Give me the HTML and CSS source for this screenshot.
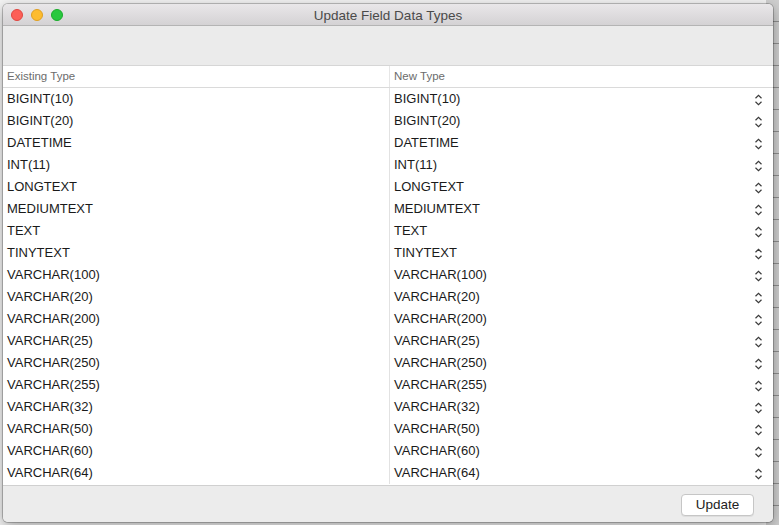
FILE: index.html
```html
<!DOCTYPE html>
<html>
<head>
<meta charset="utf-8">
<link rel="stylesheet" href="styles.css">
</head>
<body>
<div class="desk">
  <div class="bg-right"></div>
  <div class="window">
    <div class="titlebar">
      <div class="lights">
        <span class="light red"></span>
        <span class="light yellow"></span>
        <span class="light green"></span>
      </div>
      <div class="title">Update Field Data Types</div>
    </div>
    <div class="toolbar"></div>
    <div class="table">
      <div class="thead">
        <div class="th c1">Existing Type</div>
        <div class="th c2">New Type</div>
      </div>
      <div class="tbody" id="rows"></div>
    </div>
    <div class="footer">
      <button class="btn">Update</button>
    </div>
  </div>
</div>
<script src="app.js"></script>
</body>
</html>
```

FILE: app.js
```js
var types = ["BIGINT(10)","BIGINT(20)","DATETIME","INT(11)","LONGTEXT","MEDIUMTEXT","TEXT","TINYTEXT","VARCHAR(100)","VARCHAR(20)","VARCHAR(200)","VARCHAR(25)","VARCHAR(250)","VARCHAR(255)","VARCHAR(32)","VARCHAR(50)","VARCHAR(60)","VARCHAR(64)"];
var html = "";
var chev = '<svg class="step" width="9" height="12" viewBox="0 0 9 12"><path d="M1.5 4.2 L4.5 1.4 L7.5 4.2 M1.5 7.8 L4.5 10.6 L7.5 7.8" fill="none" stroke="#3a3a3a" stroke-width="1.2"/></svg>';
types.forEach(function (t) {
  html += '<div class="row"><div class="td c1">' + t + '</div><div class="td c2"><span>' + t + '</span>' + chev + '</div></div>';
});
document.getElementById("rows").innerHTML = html;
```

FILE: styles.css
```css
html, body {
  margin: 0;
  padding: 0;
}
body {
  width: 779px;
  height: 525px;
  overflow: hidden;
  background: #ececec;
  font-family: "Liberation Sans", Arial, sans-serif;
}
.desk {
  position: relative;
  width: 779px;
  height: 525px;
  background: #f3f3f3;
}
.bg-right {
  position: absolute;
  left: 766px;
  top: 0;
  width: 13px;
  height: 525px;
  background: repeating-linear-gradient(180deg, #cfcfcf 0, #cfcfcf 21px, #8f8f8f 21px, #8f8f8f 22px);
}
.window {
  position: absolute;
  left: 3px;
  top: 4px;
  width: 770px;
  height: 518px;
  display: flex;
  flex-direction: column;
  background: #ececec;
  border-radius: 5px;
  overflow: hidden;
  box-shadow: 0 0 0 1px rgba(0,0,0,0.22), 0 4px 14px rgba(0,0,0,0.35);
}
.titlebar {
  position: relative;
  height: 21px;
  flex: none;
  background: linear-gradient(180deg, #e9e7e9 0%, #d4d2d4 100%);
  border-bottom: 1px solid #b4b4b4;
  display: flex;
  align-items: center;
  justify-content: center;
}
.lights {
  position: absolute;
  left: 8px;
  top: 5px;
  display: flex;
  gap: 8px;
}
.light {
  width: 12px;
  height: 12px;
  border-radius: 50%;
  box-sizing: border-box;
}
.red { background: #fc5f57; border: 1px solid #de4640; }
.yellow { background: #fdbc2e; border: 1px solid #de9f22; }
.green { background: #29c83f; border: 1px solid #1aab2a; }
.title {
  font-size: 13.5px;
  color: #4a4a4a;
  margin-top: 1px;
}
.toolbar {
  height: 39px;
  flex: none;
  background: #ebebeb;
  border-bottom: 1px solid #d6d6d6;
}
.table {
  flex: none;
  height: 420px;
  background: #fff;
  border-bottom: 1px solid #d0d0d0;
  box-sizing: border-box;
}
.thead {
  display: flex;
  height: 22px;
  border-bottom: 1px solid #dadada;
  box-sizing: border-box;
}
.th {
  font-size: 11.5px;
  color: #6c6c6c;
  line-height: 21px;
}
.c1 {
  width: 387px;
  padding-left: 4px;
  box-sizing: border-box;
  border-right: 1px solid #e2e2e2;
}
.c2 {
  flex: 1;
  padding-left: 4px;
  box-sizing: border-box;
}
.thead .c1 { border-right-color: #e6e6e6; }
.tbody {
  display: flex;
  flex-direction: column;
}
.row {
  display: flex;
  height: 22px;
}
.td {
  font-size: 13px;
  color: #1a1a1a;
  line-height: 22px;
}
.td.c2 {
  display: flex;
  align-items: center;
  justify-content: space-between;
  padding-right: 10px;
}
.step {
  display: block;
  margin-top: 1px;
}
.footer {
  flex: 1;
  display: flex;
  align-items: center;
  justify-content: flex-end;
  padding-right: 19px;
  background: #ececec;
}
.btn {
  width: 73px;
  height: 22px;
  font-family: "Liberation Sans", Arial, sans-serif;
  font-size: 13.5px;
  color: #222;
  background: #fff;
  border: 1px solid #c6c6c6;
  border-radius: 4px;
  box-shadow: 0 1px 0 rgba(0,0,0,0.06);
  padding: 0;
  margin-top: 1px;
}
```
